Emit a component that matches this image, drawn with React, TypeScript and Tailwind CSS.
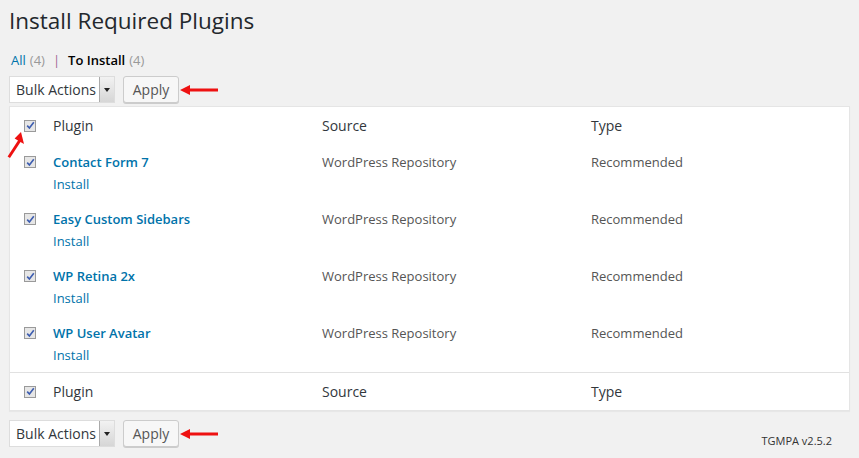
import React from 'react';

const plugins = ['Contact Form 7', 'Easy Custom Sidebars', 'WP Retina 2x', 'WP User Avatar'];

const font = { fontFamily: '"Open Sans", "Noto Sans", sans-serif' };

const CheckBox: React.FC = () => (
  <span className="flex h-[12px] w-[12px] items-center justify-center border border-[#9a9a9a] bg-[#e6e6e6]">
    <svg width="9" height="9" viewBox="0 0 9 9">
      <path d="M1.2 4.6 L3.4 7 L7.8 1.2" fill="none" stroke="#3d5db0" strokeWidth="1.6" />
    </svg>
  </span>
);

const RedArrowLeft: React.FC = () => (
  <svg width="40" height="12" viewBox="0 0 40 12" className="ml-[1px]">
    <path d="M0 6 L10 1 L10 4.6 L38 4.6 L38 7.4 L10 7.4 L10 11 Z" fill="#ee1111" />
  </svg>
);

const BulkBar: React.FC = () => (
  <div className="flex items-center">
    <div className="flex h-[27px] w-[106px] border border-[#dddddd] bg-white">
      <span className="flex flex-1 items-center pl-[6px] text-[14px] text-[#32373c]">Bulk Actions</span>
      <span className="flex w-[15px] items-center justify-center border-l border-[#aaaaaa] bg-gradient-to-b from-[#f2f2f2] to-[#d6d6d6]">
        <svg width="6" height="4" viewBox="0 0 6 4">
          <path d="M0 0 L6 0 L3 4 Z" fill="#222" />
        </svg>
      </span>
    </div>
    <button className="ml-[8px] flex h-[27px] w-[56px] items-center justify-center rounded-[3px] border border-[#cccccc] bg-[#f7f7f7] text-[14px] text-[#555555] shadow-[0_1px_0_#cccccc]">
      Apply
    </button>
    <RedArrowLeft />
  </div>
);

const HeaderRow: React.FC = () => (
  <div className="grid h-[37px] grid-cols-[43px_269px_269px_1fr] items-center text-[14px] text-[#32373c]">
    <span className="pl-[14px]">
      <CheckBox />
    </span>
    <span>Plugin</span>
    <span>Source</span>
    <span>Type</span>
  </div>
);

export default function App() {
  return (
    <div className="relative min-h-[458px] w-[859px] bg-[#f1f1f1] px-[9px]" style={font}>
      <h1 className="pt-[4px] text-[22.5px] leading-[34px] text-[#23282d]">Install Required Plugins</h1>
      <div className="mt-[12px] flex items-center text-[13px] leading-[20px] text-[#555]">
        <span className="ml-[2px] text-[#0073aa]">All</span>
        <span className="ml-[4px] text-[#999]">(4)</span>
        <span className="mx-[8px] text-[#a16696]">|</span>
        <span className="font-semibold text-[#000]">To Install</span>
        <span className="ml-[4px] text-[#999]">(4)</span>
      </div>
      <div className="mt-[6px]">
        <BulkBar />
      </div>
      <div className="mt-[3px] border border-[#e5e5e5] bg-white shadow-[0_1px_1px_rgba(0,0,0,0.04)]">
        <HeaderRow />
        {plugins.map((name) => (
          <div
            key={name}
            className="grid h-[57px] grid-cols-[43px_269px_269px_1fr] pt-[8px] text-[13px] leading-[20px]"
          >
            <span className="pl-[14px] pt-[4px]">
              <CheckBox />
            </span>
            <div className="flex flex-col gap-[2px]">
              <span className="font-semibold text-[#0073aa]">{name}</span>
              <span className="text-[#0073aa]">Install</span>
            </div>
            <span className="text-[#555]">WordPress Repository</span>
            <span className="text-[#555]">Recommended</span>
          </div>
        ))}
        <div className="border-t border-[#e1e1e1]">
          <HeaderRow />
        </div>
      </div>
      <div className="mt-[9px] flex items-start justify-between">
        <BulkBar />
        <span className="mr-[18px] mt-[13px] text-[11px] font-medium text-[#333]">TGMPA v2.5.2</span>
      </div>
      <svg className="absolute left-[4px] top-[131px]" width="22" height="28" viewBox="0 0 22 28">
        <path d="M17 1 L20 13 L16.5 11 L6 27 L3.6 25.4 L14 9.4 L10.6 7.4 Z" fill="#ee1111" />
      </svg>
    </div>
  );
}
